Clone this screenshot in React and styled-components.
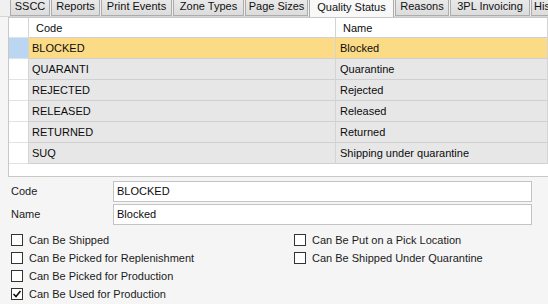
import React from 'react';
import styled, { createGlobalStyle } from 'styled-components';

const Global = createGlobalStyle`
  html, body { margin: 0; padding: 0; background: #f0f0f0; }
  body { font-family: "Liberation Sans", Arial, sans-serif; font-size: 11px; color: #1b1b1b; }
  #root { width: 548px; height: 304px; overflow: hidden; }
`;

const Window = styled.div`
  width: 548px;
  height: 304px;
  display: flex;
  flex-direction: column;
  overflow: hidden;
  background: #f0f0f0;
`;

const TabStrip = styled.div`
  display: flex;
  height: 16px;
  padding-left: 10px;
  gap: 1px;
  flex-shrink: 0;
  white-space: nowrap;
  position: relative;
  z-index: 2;
`;

const Tab = styled.div`
  flex: 0 0 ${p => p.$w}px;
  height: ${p => (p.$active ? 17 : 16)}px;
  box-sizing: border-box;
  display: flex;
  align-items: center;
  justify-content: ${p => (p.$start ? 'flex-start' : 'center')};
  padding-left: ${p => (p.$start ? 2 : 0)}px;
  padding-bottom: ${p => (p.$active ? 4 : 3)}px;
  border: 1px solid #acacac;
  border-top: none;
  border-bottom: ${p => (p.$active ? 'none' : '1px solid #acacac')};
  background: ${p => (p.$active ? '#f8f8f8' : 'linear-gradient(#e9e9e9, #dcdcdc)')};
  font-size: 11px;
  color: #111;
  overflow: hidden;
`;

const Panel = styled.div`
  flex: 1;
  display: flex;
  flex-direction: column;
  background: #f5f5f5;
  border-top: 1px solid #d6d6d6;
  padding-left: 8px;
  min-height: 0;
`;

const Grid = styled.div`
  height: 160px;
  box-sizing: border-box;
  border: 1px solid #c8c8c8;
  border-right: none;
  background: #ffffff;
  display: flex;
  flex-direction: column;
  flex-shrink: 0;
`;

const GridRow = styled.div`
  display: grid;
  grid-template-columns: 20px 307px 1fr;
  height: ${p => (p.$header ? 20 : 21)}px;
  flex-shrink: 0;
`;

const Cell = styled.div`
  box-sizing: border-box;
  display: flex;
  align-items: center;
  padding-left: ${p => (p.$header ? 7 : p.$name ? 4 : 3)}px;
  border-right: 1px solid #d4d4d4;
  border-bottom: 1px solid #d0d0d0;
  background: ${p => (p.$header ? '#ffffff' : p.$selected ? '#fcdb86' : '#e7e7e7')};
  color: #0c0c0c;
  white-space: nowrap;
  overflow: hidden;
`;

const RowHead = styled.div`
  box-sizing: border-box;
  border-right: 1px solid #d4d4d4;
  border-bottom: 1px solid #e2e2e2;
  background: ${p => (p.$selected ? '#bad6f0' : '#ffffff')};
`;

const Form = styled.div`
  display: grid;
  grid-template-columns: 105px 419px;
  grid-auto-rows: 21px;
  row-gap: 2px;
  padding-top: 4px;
`;

const Label = styled.div`
  display: flex;
  align-items: center;
  padding-left: 3px;
  padding-bottom: 1px;
  color: #1b1b1b;
`;

const Input = styled.div`
  box-sizing: border-box;
  height: 21px;
  border: 1px solid #c3c3c3;
  background: #ffffff;
  display: flex;
  align-items: center;
  padding: 0 0 2px 3px;
  color: #0c0c0c;
`;

const Checks = styled.div`
  display: grid;
  grid-template-columns: 283px auto;
  grid-template-rows: repeat(4, 18px);
  grid-auto-flow: column;
  padding-left: 3px;
  margin-top: 6px;
`;

const CheckItem = styled.label`
  display: flex;
  align-items: center;
  gap: 6px;
  color: #1b1b1b;
  white-space: nowrap;
`;

const Box = styled.span`
  width: 12px;
  height: 12px;
  box-sizing: border-box;
  border: 1px solid #333333;
  background: #ffffff;
  display: flex;
  align-items: center;
  justify-content: center;
  flex-shrink: 0;
`;

const tabs = [
  ['SSCC', 40],
  ['Reports', 49],
  ['Print Events', 71],
  ['Zone Types', 71],
  ['Page Sizes', 63],
  ['Quality Status', 85, true],
  ['Reasons', 54],
  ['3PL Invoicing', 80],
  ['History', 60, false, true],
];

const rows = [
  ['BLOCKED', 'Blocked', true],
  ['QUARANTI', 'Quarantine'],
  ['REJECTED', 'Rejected'],
  ['RELEASED', 'Released'],
  ['RETURNED', 'Returned'],
  ['SUQ', 'Shipping under quarantine'],
];

const checks = [
  ['Can Be Shipped', false],
  ['Can Be Picked for Replenishment', false],
  ['Can Be Picked for Production', false],
  ['Can Be Used for Production', true],
  ['Can Be Put on a Pick Location', false],
  ['Can Be Shipped Under Quarantine', false],
];

function CheckBox({ checked }) {
  return (
    <Box>
      {checked && (
        <svg width="10" height="10" viewBox="0 0 10 10">
          <path d="M1.5 5 L4 7.5 L8.5 2" fill="none" stroke="#111" strokeWidth="1.6" />
        </svg>
      )}
    </Box>
  );
}

export default function App() {
  return (
    <Window>
      <Global />
      <TabStrip>
        {tabs.map(([t, w, a, s]) => (
          <Tab key={t} $w={w} $active={a} $start={s}>{t}</Tab>
        ))}
      </TabStrip>
      <Panel>
        <Grid>
          <GridRow $header>
            <RowHead />
            <Cell $header>Code</Cell>
            <Cell $header>Name</Cell>
          </GridRow>
          {rows.map(([c, n, s]) => (
            <GridRow key={c}>
              <RowHead $selected={s} />
              <Cell $selected={s}>{c}</Cell>
              <Cell $selected={s} $name>{n}</Cell>
            </GridRow>
          ))}
        </Grid>
        <Form>
          <Label>Code</Label>
          <Input>BLOCKED</Input>
          <Label>Name</Label>
          <Input>Blocked</Input>
        </Form>
        <Checks>
          {checks.map(([t, c]) => (
            <CheckItem key={t}>
              <CheckBox checked={c} />
              {t}
            </CheckItem>
          ))}
        </Checks>
      </Panel>
    </Window>
  );
}
